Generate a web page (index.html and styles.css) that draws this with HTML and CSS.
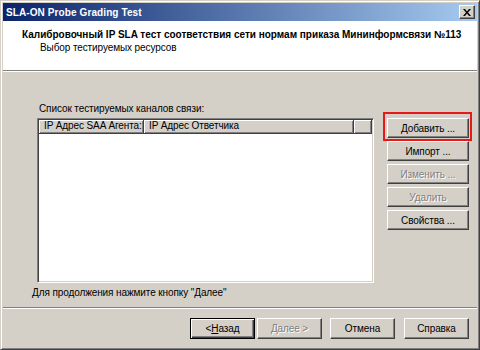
FILE: index.html
```html
<!DOCTYPE html>
<html lang="ru">
<head>
<meta charset="utf-8">
<title>SLA-ON Probe Grading Test</title>
<link rel="stylesheet" href="styles.css">
</head>
<body>
<div class="window">
  <div class="titlebar">
    <span class="title-text">SLA-ON Probe Grading Test</span>
    <div class="close-btn">
      <svg width="8" height="7" viewBox="0 0 8 7"><path d="M0 0h2l2 2.5L6 0h2L5 3.5 8 7H6L4 4.5 2 7H0l3-3.5z" fill="#000"/></svg>
    </div>
  </div>
  <div class="header">
    <div class="h-title">Калибровочный IP SLA тест соответствия сети нормам приказа Мининформсвязи №113</div>
    <div class="h-sub">Выбор тестируемых ресурсов</div>
  </div>
  <div class="content">
    <div class="list-label">Список тестируемых каналов связи:</div>
    <div class="list-row">
      <div class="listview">
        <div class="lv-head">
          <div class="lv-col c1">IP Адрес SAA Агента:</div>
          <div class="lv-col c2">IP Адрес Ответчика</div>
          <div class="lv-col c3"></div>
        </div>
        <div class="lv-body"></div>
      </div>
      <div class="side-buttons">
        <div class="btn side">Добавить ...</div>
        <div class="btn side">Импорт ...</div>
        <div class="btn side disabled">Изменить ...</div>
        <div class="btn side disabled">Удалить</div>
        <div class="btn side">Свойства ...</div>
      </div>
    </div>
    <div class="hint">Для продолжения нажмите кнопку "Далее"</div>
  </div>
  <div class="footer">
    <div class="btn wiz default">&lt; <u>Н</u>азад</div>
    <div class="btn wiz disabled"><u>Д</u>алее &gt;</div>
    <div class="btn wiz cancel">Отмена</div>
    <div class="btn wiz help">Справка</div>
  </div>
  <div class="highlight"></div>
</div>
</body>
</html>
```
FILE: styles.css
```css
html, body {
  margin: 0;
  padding: 0;
  background: #d4d0c8;
}
body {
  font-family: "Liberation Sans", Arial, sans-serif;
  font-size: 10px;
  letter-spacing: -0.1px;
  color: #000;
}
.window {
  position: relative;
  width: 480px;
  height: 350px;
  box-sizing: border-box;
  background: #d4d0c8;
  border-top: 1px solid #d4d0c8;
  border-left: 1px solid #d4d0c8;
  border-right: 1px solid #404040;
  border-bottom: 1px solid #404040;
  box-shadow: inset 1px 1px #fff, inset -1px -1px #808080;
  padding: 2px;
  display: flex;
  flex-direction: column;
}
.titlebar {
  height: 18px;
  background: linear-gradient(to right, #0a246a, #a6caf0);
  display: flex;
  align-items: center;
  justify-content: space-between;
  flex-shrink: 0;
}
.title-text {
  color: #fff;
  font-weight: bold;
  font-size: 10px;
  letter-spacing: 0.1px;
  padding-left: 3px;
}
.close-btn {
  width: 16px;
  height: 14px;
  margin-right: 2px;
  box-sizing: border-box;
  background: #d4d0c8;
  border: 1px solid;
  border-color: #fff #404040 #404040 #fff;
  box-shadow: inset -1px -1px #808080;
  display: flex;
  align-items: center;
  justify-content: center;
}
.header {
  height: 49px;
  background: #fff;
  border-bottom: 1px solid #808080;
  box-shadow: 0 1px #fff;
  flex-shrink: 0;
  position: relative;
}
.h-title {
  font-weight: bold;
  letter-spacing: 0;
  padding: 7px 0 0 19px;
  line-height: 13px;
  white-space: nowrap;
}
.h-sub {
  padding: 0 0 0 37px;
  line-height: 13px;
}
.content {
  flex: 1;
  margin-top: 1px;
  padding: 30px 0 0 34px;
  display: flex;
  flex-direction: column;
  border-bottom: 1px solid #808080;
  box-shadow: 0 1px #fff;
}
.list-label {
  line-height: 13px;
  padding-left: 2px;
  margin-bottom: 3px;
}
.list-row {
  display: flex;
  align-items: flex-start;
}
.listview {
  width: 337px;
  height: 165px;
  box-sizing: border-box;
  background: #fff;
  border: 1px solid;
  border-color: #808080 #fff #fff #808080;
  box-shadow: inset 1px 1px #404040, inset -1px -1px #d4d0c8;
  padding: 1px;
  display: flex;
  flex-direction: column;
}
.lv-head {
  display: flex;
  height: 14px;
  flex-shrink: 0;
}
.lv-col {
  box-sizing: border-box;
  background: #d4d0c8;
  border-right: 1px solid #404040;
  border-bottom: 1px solid #404040;
  box-shadow: inset 1px 1px #fff, inset -1px -1px #808080;
  line-height: 12px;
  padding-left: 5px;
  white-space: nowrap;
  overflow: hidden;
}
.c1 { width: 105px; }
.c2 { width: 210px; }
.c3 { flex: 1; }
.side-buttons {
  margin-left: 13px;
  display: flex;
  flex-direction: column;
  gap: 3px;
}
.btn {
  box-sizing: border-box;
  background: #d4d0c8;
  border: 1px solid;
  border-color: #fff #404040 #404040 #fff;
  box-shadow: inset -1px -1px #808080;
  display: flex;
  align-items: center;
  justify-content: center;
  white-space: nowrap;
}
.btn.side {
  width: 82px;
  height: 20px;
}
.btn.disabled {
  color: #808080;
  text-shadow: 1px 1px #fff;
}
.hint {
  margin-top: 3px;
  line-height: 13px;
  margin-left: -5px;
}
.footer {
  height: 38px;
  margin-top: 1px;
  display: flex;
  align-items: flex-start;
  justify-content: flex-end;
  padding: 9px 8px 0 0;
  box-sizing: border-box;
}
.btn.wiz {
  width: 65px;
  height: 21px;
}
.btn.default {
  border: 1px solid #000;
  box-shadow: inset 1px 1px #fff, inset -1px -1px #404040, inset -2px -2px #808080;
  margin-right: 2px;
}
.btn.cancel { margin-left: 8px; }
.btn.help { margin-left: 9px; }
.highlight {
  position: absolute;
  left: 382px;
  top: 111px;
  width: 89px;
  height: 29px;
  box-sizing: border-box;
  border: 2px solid #e81818;
}
```
